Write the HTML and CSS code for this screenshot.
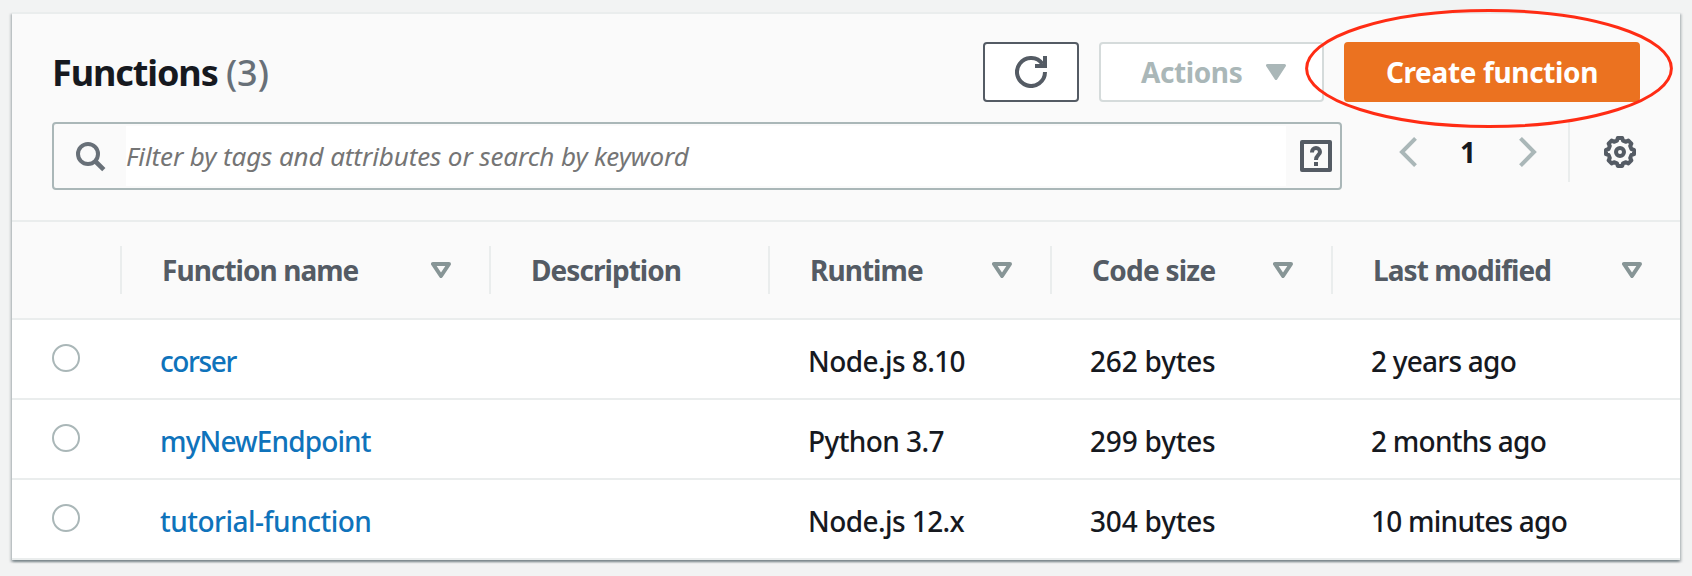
FILE: index.html
```html
<!DOCTYPE html>
<html lang="en">
<head>
<meta charset="utf-8">
<title>Functions</title>
<link rel="stylesheet" href="styles.css">
</head>
<body>
<svg class="defs" width="0" height="0" aria-hidden="true">
  <symbol id="sort" viewBox="0 0 20 16"><path d="M2 2H18L10 14Z" fill="none" stroke="currentColor" stroke-width="4" stroke-linejoin="round"/></symbol>
</svg>
<main class="panel">
  <header class="toolbar">
    <div class="title-row">
      <h1 class="title">Functions <span class="count">(3)</span></h1>
      <div class="actions">
        <button class="btn btn-icon" aria-label="Refresh">
          <svg width="32" height="32" viewBox="0 0 32 32" fill="none" stroke="currentColor" stroke-width="4"><path d="M30 16A14 14 0 1 1 27.5 8"/><path d="M30 0V10H20"/></svg>
        </button>
        <button class="btn btn-disabled"><span class="actions-text">Actions</span>
          <svg width="20" height="16" viewBox="0 0 20 16"><path d="M1.5 1.5H18.5L10 14.5Z" fill="currentColor" stroke="currentColor" stroke-width="3" stroke-linejoin="round"/></svg>
        </button>
        <div class="create-wrap">
          <button class="btn btn-primary">Create function</button>
          <svg class="highlight" width="370" height="122" viewBox="0 0 370 122"><ellipse cx="185" cy="60.5" rx="182.4" ry="58" fill="none" stroke="#ff2c14" stroke-width="3"/></svg>
        </div>
      </div>
    </div>
    <div class="filter-row">
      <div class="search">
        <svg class="search-icon" width="30" height="30" viewBox="0 0 30 30" fill="none" stroke="currentColor"><circle cx="12" cy="12" r="10" stroke-width="4"/><path d="M19 19L27.8 27.6" stroke-width="4.6"/></svg>
        <div class="search-input">Filter by tags and attributes or search by keyword</div>
        <svg class="help" width="32" height="32" viewBox="0 0 32 32" fill="none" stroke="currentColor" stroke-width="4"><rect x="2" y="2" width="28" height="28" stroke-linejoin="round"/><path d="M12 12.4V12A4 4 0 0 1 20 12C20 15 16 15 16 20M16 22V26"/></svg>
      </div>
      <div class="pager">
        <svg width="18" height="30" viewBox="0 0 18 30" fill="none" stroke="#aab7b8" stroke-width="4"><path d="M16.5 1.4L3 15L16.5 28.6"/></svg>
        <span class="page">1</span>
        <svg width="18" height="30" viewBox="0 0 18 30" fill="none" stroke="#aab7b8" stroke-width="4"><path d="M1.5 1.4L15 15L1.5 28.6"/></svg>
      </div>
      <div class="settings">
        <svg width="32" height="32" viewBox="0 0 32 32" fill="none" stroke="currentColor" stroke-width="4" stroke-linejoin="round"><circle cx="16" cy="16" r="4"/><path d="M13.8 2H18.2L19 4.6L22 5.8L24.4 4.6L27.4 7.6L26.2 10L27.4 13L30 13.8V18.2L27.4 19L26.2 22L27.4 24.4L24.4 27.4L22 26.2L19 27.4L18.2 30H13.8L13 27.4L10 26.2L7.6 27.4L4.6 24.4L5.8 22L4.6 19L2 18.2V13.8L4.6 13L5.8 10L4.6 7.6L7.6 4.6L10 5.8L13 4.6Z"/></svg>
      </div>
    </div>
  </header>
  <section class="table">
    <div class="row head">
      <div></div>
      <div class="th"><span>Function name</span><svg width="20" height="16"><use href="#sort"/></svg></div>
      <div class="th"><span>Description</span></div>
      <div class="th"><span>Runtime</span><svg width="20" height="16"><use href="#sort"/></svg></div>
      <div class="th size"><span>Code size</span><svg width="20" height="16"><use href="#sort"/></svg></div>
      <div class="th"><span>Last modified</span><svg width="20" height="16"><use href="#sort"/></svg></div>
    </div>
    <div class="row">
      <div class="select"><span class="radio"></span></div>
      <div class="td link tight">corser</div><div></div>
      <div class="td runtime">Node.js 8.10</div>
      <div class="td bytes">262 bytes</div>
      <div class="td ago">2 years ago</div>
    </div>
    <div class="row">
      <div class="select"><span class="radio"></span></div>
      <div class="td link">myNewEndpoint</div><div></div>
      <div class="td runtime">Python 3.7</div>
      <div class="td bytes">299 bytes</div>
      <div class="td ago">2 months ago</div>
    </div>
    <div class="row">
      <div class="select"><span class="radio"></span></div>
      <div class="td link loose">tutorial-function</div><div></div>
      <div class="td runtime">Node.js 12.x</div>
      <div class="td bytes">304 bytes</div>
      <div class="td ago">10 minutes ago</div>
    </div>
  </section>
</main>
</body>
</html>
```
FILE: styles.css
```css
* { box-sizing: border-box; }
body {
  margin: 0;
  padding: 12px 12px 16px;
  height: 576px;
  background: #f2f3f3;
  color: #16191f;
  font: 500 28px "Noto Sans", "Open Sans", sans-serif;
  overflow: hidden;
}
svg { display: block; flex: none; }
.defs { position: absolute; }
.panel {
  height: 548px;
  background: #fff;
  border-top: 2px solid #eaeded;
  box-shadow: 0 2px 2px rgba(0, 28, 36, .3), 2px 2px 2px rgba(0, 28, 36, .15), -2px 2px 2px rgba(0, 28, 36, .15);
}
.toolbar {
  height: 208px;
  padding: 28px 40px 0;
  background: #fafafa;
  border-bottom: 2px solid #eaeded;
}
.title-row { display: flex; justify-content: space-between; height: 60px; }
.title { margin: 0; font-size: 36px; font-weight: 700; line-height: 62px; letter-spacing: -1.1px; white-space: nowrap; }
.count { font-weight: 500; color: #687078; letter-spacing: 0; }
.actions { display: flex; gap: 20px; }
.btn {
  display: flex;
  align-items: center;
  height: 60px;
  padding: 0;
  border: 2px solid #545b64;
  border-radius: 4px;
  background: #fff;
  color: #545b64;
  font: 700 28px/56px "Noto Sans", sans-serif;
  white-space: nowrap;
}
.btn-icon { width: 96px; justify-content: center; }
.btn-disabled { width: 225px; padding: 0 36px 0 40px; justify-content: space-between; border-color: #d5dbdb; color: #aab7b8; letter-spacing: -.4px; }
.create-wrap { position: relative; }
.btn-primary { width: 296px; justify-content: center; border-color: #eb7220; background: #eb7220; color: #fff; letter-spacing: -.35px; }
.highlight { position: absolute; left: -40px; top: -34px; pointer-events: none; }
.filter-row { display: flex; margin-top: 20px; }
.search {
  display: flex;
  align-items: center;
  width: 1290px;
  height: 68px;
  border: 2px solid #aab7b8;
  border-radius: 4px;
}
.search-icon { margin: 1px 20px 0 22px; color: #687078; }
.search-input {
  width: 1160px;
  height: 60px;
  background: #fff;
  color: #757575;
  font-size: 26px;
  font-style: italic;
  font-weight: 400;
  line-height: 60px;
  letter-spacing: -.1px;
  white-space: nowrap;
}
.help { margin-left: 14px; color: #545b64; }
.pager { display: flex; align-items: center; justify-content: space-between; width: 138px; height: 60px; margin-left: 57px; }
.page { font-size: 28px; font-weight: 700; line-height: 60px; }
.settings { display: flex; align-items: center; height: 60px; margin-left: 31px; padding-left: 34px; border-left: 2px solid #eaeded; color: #545b64; }
.row { display: grid; grid-template-columns: 108px 369px 279px 282px 281px 349px; height: 80px; border-bottom: 2px solid #eaeded; }
.head { height: 98px; background: #fafafa; }
.th {
  display: flex;
  align-items: center;
  justify-content: space-between;
  height: 48px;
  margin-top: 24px;
  padding: 0 38px 0 40px;
  border-left: 2px solid #eaeded;
  color: #545b64;
  font-weight: 700;
  line-height: 50px;
  letter-spacing: -.95px;
  white-space: nowrap;
}
.th svg { color: #879596; }
.size { letter-spacing: -.75px; }
.select { padding: 24px 0 0 40px; }
.radio { display: block; width: 28px; height: 28px; border: 2px solid #aab7b8; border-radius: 50%; background: #fff; }
.td { padding-left: 40px; line-height: 82px; height: 78px; white-space: nowrap; }
.link { color: #0f73bb; letter-spacing: -.87px; }
.tight { letter-spacing: -1.4px; }
.loose { letter-spacing: -.5px; }
.runtime { letter-spacing: -.58px; }
.bytes { letter-spacing: -.2px; }
.ago { letter-spacing: -.76px; }
```
